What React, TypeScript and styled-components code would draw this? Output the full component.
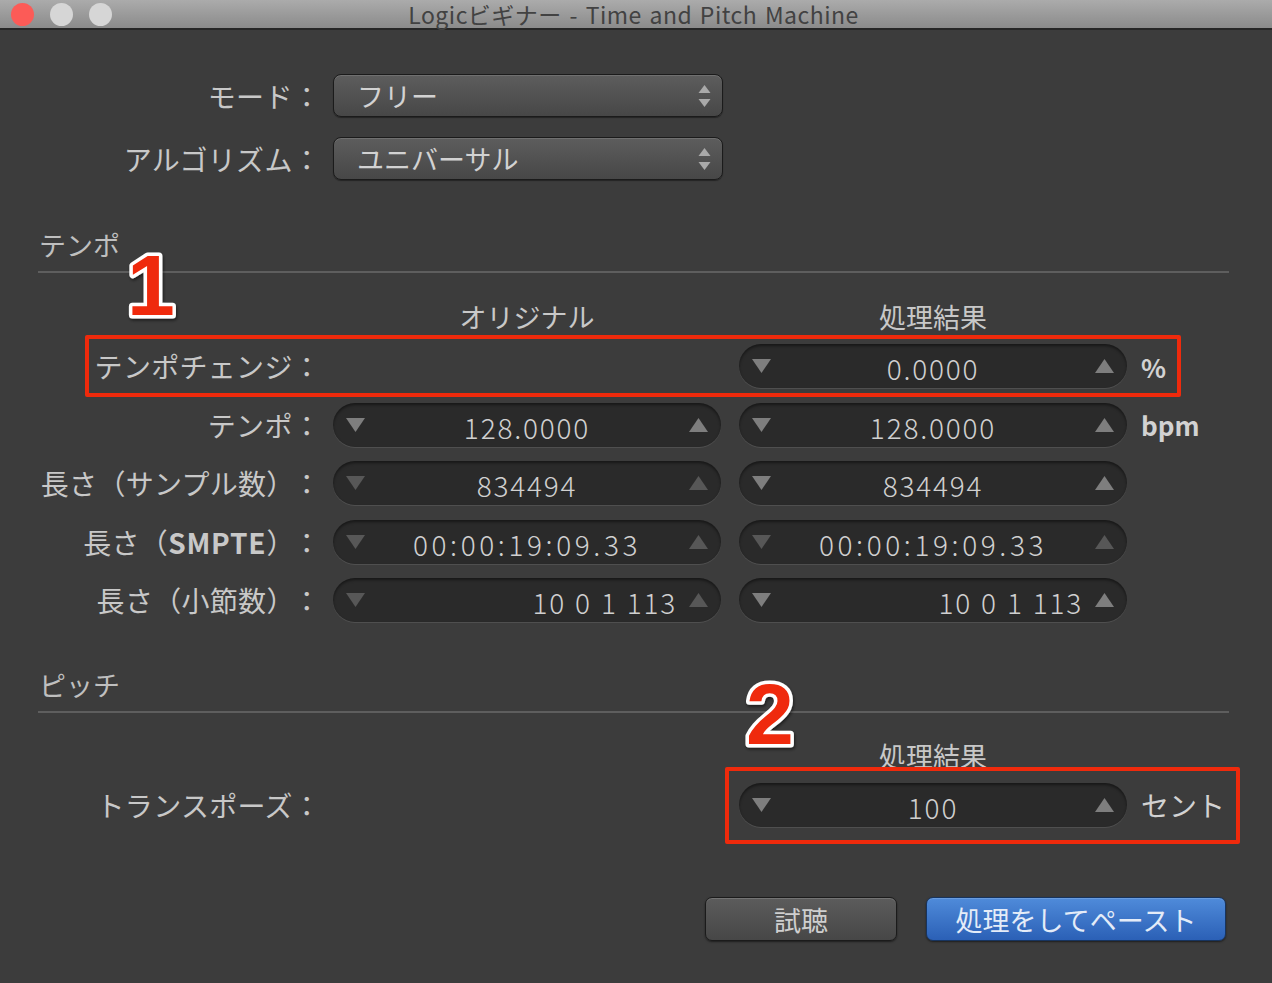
import React from 'react';
import styled, { createGlobalStyle } from 'styled-components';

const GlobalStyle = createGlobalStyle`
  html, body {
    margin: 0;
    padding: 0;
    background: #3c3c3c;
  }
  * {
    box-sizing: border-box;
  }
`;

const FONT = `"Noto Sans CJK JP", "Noto Sans", sans-serif`;

const Latin = styled.span`
  font-weight: 700;
  letter-spacing: 0.8px;
`;

const Colon = styled.span<{ $gap: number }>`
  margin-left: ${(p) => p.$gap}px;
`;

type Row = {
  label: React.ReactNode;
  key: string;
  colonGap: number;
  original: string;
  result: string;
  unit?: string;
  alignRight?: boolean;
  spacing?: number;
  dimOriginal?: boolean;
  dimResult?: boolean;
};

const tempoRows: Row[] = [
  { key: 'tempo', label: 'テンポ', colonGap: 0, original: '128.0000', result: '128.0000', unit: 'bpm' },
  { key: 'samples', label: '長さ（サンプル数）', colonGap: 12, original: '834494', result: '834494', dimOriginal: true },
  {
    key: 'smpte',
    label: (
      <>
        長さ（<Latin>SMPTE</Latin>）
      </>
    ),
    colonGap: 12,
    original: '00:00:19:09.33',
    result: '00:00:19:09.33',
    spacing: 3.6,
    dimOriginal: true,
    dimResult: true,
  },
  { key: 'bars', label: '長さ（小節数）', colonGap: 12, original: '10 0 1 113', result: '10 0 1 113', alignRight: true, dimOriginal: true },
];

const Triangle: React.FC<{ up?: boolean; color: string }> = ({ up, color }) => (
  <svg width="19" height="14" viewBox="0 0 19 14">
    {up ? <polygon points="9.5,0 19,14 0,14" fill={color} /> : <polygon points="0,0 19,0 9.5,14" fill={color} />}
  </svg>
);

const Stepper: React.FC<{ value: string; alignRight?: boolean; dim?: boolean; spacing?: number }> = ({
  value,
  alignRight,
  dim,
  spacing,
}) => {
  const c = dim ? '#575757' : '#7e7e7e';
  return (
    <StepperBox>
      <Triangle color={c} />
      <StepperValue $right={alignRight} $spacing={spacing ?? 1.8}>
        {value}
      </StepperValue>
      <Triangle up color={c} />
    </StepperBox>
  );
};

const PopupArrows: React.FC = () => (
  <svg width="13" height="24" viewBox="0 0 13 24">
    <polygon points="6.5,1 12.5,9 0.5,9" fill="#a9a9a9" />
    <polygon points="0.5,15 12.5,15 6.5,23" fill="#a9a9a9" />
  </svg>
);

const Badge: React.FC<{ n: string }> = ({ n }) => (
  <svg width="66" height="80" viewBox="0 0 66 80">
    <defs>
      <filter id={`shadow${n}`} x="-20%" y="-20%" width="140%" height="140%">
        <feDropShadow dx="1" dy="2" stdDeviation="1.5" floodColor="#000" floodOpacity="0.5" />
      </filter>
    </defs>
    <text
      x="33"
      y="70"
      textAnchor="middle"
      fontFamily='"Liberation Sans", Arial, sans-serif'
      fontWeight="900"
      fontSize="86"
      fill="#ef2a0c"
      stroke="#ffffff"
      strokeWidth="7"
      strokeLinejoin="round"
      paintOrder="stroke"
      filter={`url(#shadow${n})`}
    >
      {n}
    </text>
  </svg>
);

export default function App() {
  return (
    <Window>
      <GlobalStyle />
      <TitleBar>
        <Lights>
          <Light $color="#fc5b57" />
          <Light $color="#d6d6d6" />
          <Light $color="#d6d6d6" />
        </Lights>
        <Title>Logicビギナー - Time and Pitch Machine</Title>
      </TitleBar>

      <Body>
        <PopupGrid>
          <Label>モード：</Label>
          <Popup>
            <span>フリー</span>
            <PopupArrows />
          </Popup>
          <Label>アルゴリズム：</Label>
          <Popup>
            <span>ユニバーサル</span>
            <PopupArrows />
          </Popup>
        </PopupGrid>

        <Section $top={49}>
          <SectionTitle>テンポ</SectionTitle>
          <Divider />
          <BadgeSpot $left={80} $top={16}>
            <Badge n="1" />
          </BadgeSpot>
          <Rows $top={28}>
            <HeadRow>
              <span />
              <ColumnHead>オリジナル</ColumnHead>
              <ColumnHead>処理結果</ColumnHead>
            </HeadRow>
            <ValueRow>
              <Label>テンポチェンジ：</Label>
              <span />
              <Stepper value="0.0000" />
              <Unit $bold>%</Unit>
              <Highlight $inset="-9px 48px -9px 47px" />
            </ValueRow>
            {tempoRows.map((r) => (
              <ValueRow key={r.key}>
                <Label>
                  {r.label}
                  <Colon $gap={r.colonGap}>：</Colon>
                </Label>
                <Stepper value={r.original} alignRight={r.alignRight} dim={r.dimOriginal} spacing={r.spacing} />
                <Stepper value={r.result} alignRight={r.alignRight} dim={r.dimResult} spacing={r.spacing} />
                <Unit $bold>{r.unit ?? ''}</Unit>
              </ValueRow>
            ))}
          </Rows>
        </Section>

        <Section $top={47}>
          <SectionTitle>ピッチ</SectionTitle>
          <Divider />
          <BadgeSpot $left={699} $top={5}>
            <Badge n="2" />
          </BadgeSpot>
          <Rows $top={27}>
            <HeadRow>
              <span />
              <span />
              <ColumnHead>処理結果</ColumnHead>
            </HeadRow>
            <ValueRow>
              <Label>トランスポーズ：</Label>
              <span />
              <Stepper value="100" />
              <Unit>セント</Unit>
              <Highlight $inset="-16px -11px -17px 687px" />
            </ValueRow>
          </Rows>
        </Section>

        <Buttons>
          <Button>試聴</Button>
          <Button $primary>処理をしてペースト</Button>
        </Buttons>
      </Body>
    </Window>
  );
}

const Window = styled.div`
  width: 1272px;
  height: 983px;
  background: #3c3c3c;
  font-family: ${FONT};
  display: flex;
  flex-direction: column;
  overflow: hidden;
`;

const TitleBar = styled.div`
  position: relative;
  height: 30px;
  flex: none;
  background: linear-gradient(#ababab, #8b8b8b);
  border-bottom: 2px solid #262626;
  display: flex;
  align-items: center;
  justify-content: center;
`;

const Lights = styled.div`
  position: absolute;
  left: 11px;
  top: 3px;
  display: flex;
  gap: 16px;
`;

const Light = styled.span<{ $color: string }>`
  width: 23px;
  height: 23px;
  border-radius: 50%;
  background: ${(p) => p.$color};
`;

const Title = styled.div`
  font-size: 23px;
  line-height: 28px;
  color: #424242;
  margin-left: -5px;
  letter-spacing: 0.5px;
  word-spacing: 2px;
`;

const Body = styled.div`
  padding: 44px 43px 0 38px;
  display: flex;
  flex-direction: column;
`;

const PopupGrid = styled.div`
  display: grid;
  grid-template-columns: 277px 390px;
  column-gap: 18px;
  row-gap: 20px;
  align-items: center;
`;

const Label = styled.div`
  font-size: 28px;
  color: #c8c8c8;
  text-align: right;
  white-space: nowrap;
  line-height: 32px;
  letter-spacing: 0.3px;
  margin-right: -6px;
`;

const Popup = styled.div`
  height: 43px;
  border-radius: 8px;
  border: 1px solid #1b1b1b;
  background: linear-gradient(#5d5d5d, #474747);
  box-shadow: inset 0 1px 0 rgba(255, 255, 255, 0.12), 0 1px 1px rgba(0, 0, 0, 0.4);
  display: flex;
  align-items: center;
  justify-content: space-between;
  padding: 0 11px 0 23px;
  font-size: 27px;
  color: #d2d2d2;
`;

const Section = styled.div<{ $top: number }>`
  position: relative;
  margin-top: ${(p) => p.$top}px;
`;

const SectionTitle = styled.div`
  font-size: 27px;
  line-height: 32px;
  color: #bfbfbf;
  padding-left: 1px;
`;

const Divider = styled.div`
  height: 2px;
  margin-top: 10px;
  background: #5e5e5e;
`;

const BadgeSpot = styled.div<{ $left: number; $top: number }>`
  position: absolute;
  left: ${(p) => p.$left}px;
  top: ${(p) => p.$top}px;
  z-index: 2;
`;

const Rows = styled.div<{ $top: number }>`
  display: flex;
  flex-direction: column;
  gap: 14.5px;
  margin-top: ${(p) => p.$top}px;
`;

const ValueRow = styled.div`
  position: relative;
  display: grid;
  grid-template-columns: 277px 388px 388px 1fr;
  column-gap: 18px;
  align-items: center;
`;

const HeadRow = styled(ValueRow)`
  margin-bottom: -3.5px;
`;

const ColumnHead = styled.div`
  text-align: center;
  font-size: 27px;
  line-height: 32px;
  color: #c8c8c8;
`;

const StepperBox = styled.div`
  height: 44px;
  border-radius: 22px;
  background: #2a2a2a;
  box-shadow: inset 0 2px 3px rgba(0, 0, 0, 0.45), 0 1px 0 rgba(255, 255, 255, 0.1);
  display: flex;
  align-items: center;
  padding: 0 13px;
  gap: 4px;
`;

const StepperValue = styled.div<{ $right?: boolean; $spacing: number }>`
  flex: 1;
  text-align: ${(p) => (p.$right ? 'right' : 'center')};
  padding-right: ${(p) => (p.$right ? 8 : 0)}px;
  font-size: 28px;
  font-weight: 300;
  color: #d0d0d0;
  letter-spacing: ${(p) => p.$spacing}px;
  word-spacing: 1px;
  padding-top: 4px;
  white-space: nowrap;
`;

const Unit = styled.div<{ $bold?: boolean }>`
  margin-left: -4px;
  font-size: ${(p) => (p.$bold ? 26 : 28)}px;
  font-weight: ${(p) => (p.$bold ? 700 : 400)};
  color: #d2d2d2;
  white-space: nowrap;
`;

const Highlight = styled.div<{ $inset: string }>`
  position: absolute;
  inset: ${(p) => p.$inset};
  border: 4px solid #ef2a0c;
  border-radius: 2px;
  pointer-events: none;
  z-index: 1;
`;

const Buttons = styled.div`
  display: flex;
  justify-content: flex-end;
  gap: 29px;
  margin-top: 70px;
  padding-right: 3px;
`;

const Button = styled.div<{ $primary?: boolean }>`
  height: 44px;
  width: ${(p) => (p.$primary ? 300 : 192)}px;
  border-radius: 7px;
  border: 1px solid ${(p) => (p.$primary ? '#17345f' : '#1b1b1b')};
  background: ${(p) => (p.$primary ? 'linear-gradient(#4f8bda, #2b60b6)' : 'linear-gradient(#5c5c5c, #474747)')};
  box-shadow: inset 0 1px 0 rgba(255, 255, 255, 0.15), 0 1px 2px rgba(0, 0, 0, 0.5);
  display: flex;
  align-items: center;
  justify-content: center;
  font-size: 27px;
  color: ${(p) => (p.$primary ? '#e4ecf8' : '#cfcfcf')};
`;
